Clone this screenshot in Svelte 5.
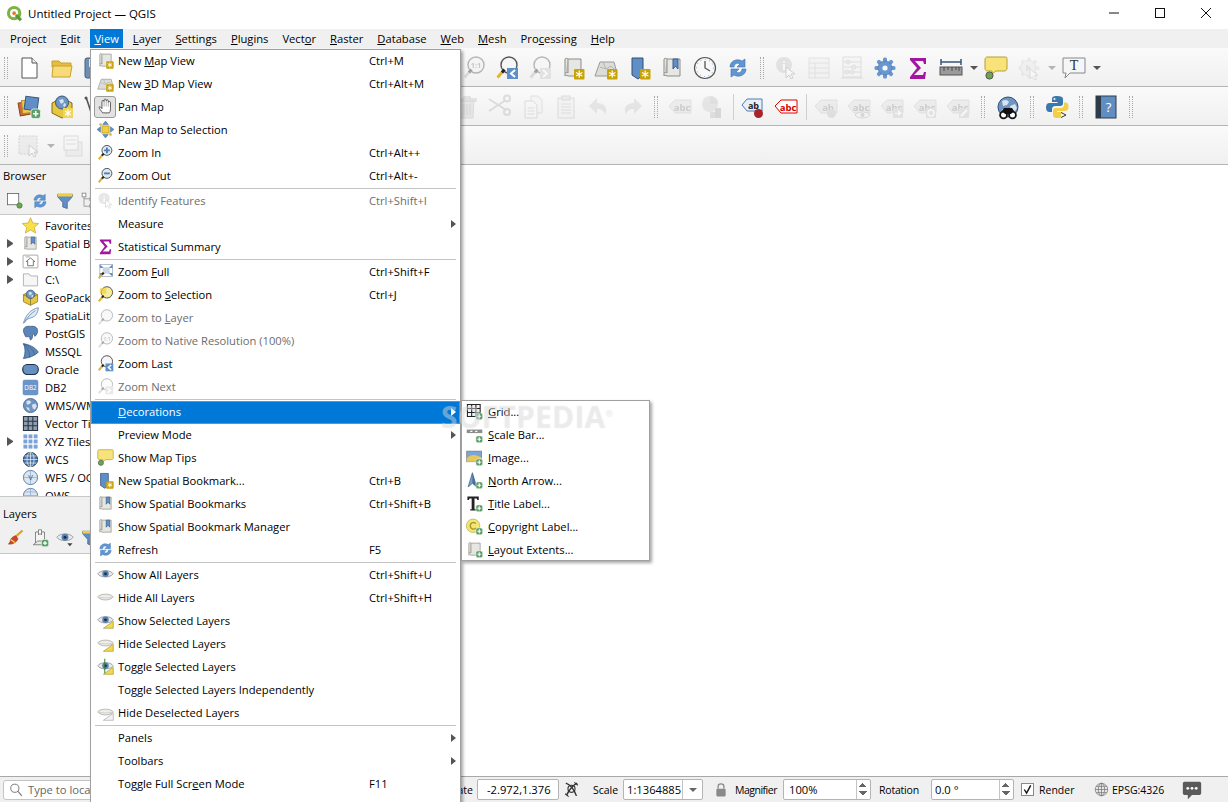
<script>
  // building blocks for the small icons, all in a 24x24 box
  const starBadge = '<rect x="13" y="13" width="10.5" height="10.5" rx="1" fill="#c9a208"/><path d="M18.2 14.6v7.2M15 16.4l6.4 3.6M21.4 16.4l-6.4 3.6" stroke="#fff" stroke-width="1.2"/>';
  const plusBadge = '<rect x="14" y="14" width="9.5" height="9.5" rx="2.5" fill="#5c9e68" stroke="#eef4ee" stroke-width=".8"/><path d="M18.7 16v5.4M16 18.7h5.4" stroke="#fff" stroke-width="1.6"/>';
  const scroll = '<path d="M4 3c1-1 2-1 3 0h13v17H7c-1.5-1-2.5-1-3 0z" fill="#e6e6e2" stroke="#8d8d88"/><path d="M7 3v14c-1-1-2-1-3 0" fill="#cfcfca" stroke="#8d8d88"/>';
  const map3dBase = '<path d="M6 6h14l3 11-5 1-4 2H1z" fill="#dcdcd8" stroke="#9a9a96"/><path d="M6 11l6 2 5-3 4 4M9 6l3 7" fill="none" stroke="#b5b5b0"/>';
  const bookmarkBlue = '<path d="M5 2h11v17l-5 4-6-4z" fill="#5f8fc6" stroke="#2f4f78"/>';
  const bookmarkGray = scroll + '<path d="M13 3h5v10l-2.5-3-2.5 3z" fill="#5f8fc6" stroke="#3c5f8c"/>';
  const glass = (fill = '#f4f6f8', r = 7) => `<circle cx="14" cy="9" r="${r}" fill="${fill}" stroke="#555" stroke-width="1.4"/>`;
  const handle = '<path d="M9 14 2.5 21.5" stroke="#e2b428" stroke-width="2.8"/><path d="M9.5 13.5 7 16.5" stroke="#222" stroke-width="2.8"/>';
  const eyeOpen = '<path d="M1 11c4-6 18-6 22 0-4 6-18 6-22 0z" fill="#e6e8ec" stroke="#8a8a8a"/><circle cx="12" cy="11" r="4.6" fill="#5582b4"/><circle cx="12" cy="11" r="2" fill="#1d2c3e"/>';
  const eyeShut = '<path d="M1 11c4-5 18-5 22 0-4 6-18 6-22 0z" fill="#ecebe6" stroke="#a3a39e"/><path d="M1 11c5 2 17 2 22 0" fill="#f8f8f4" stroke="#c4c4bf"/>';
  const corner = '<path d="M9 23 23 23V13z" fill="#f4d94a" stroke="#948634" stroke-width=".8"/>';
  const globeBase = '<circle cx="12" cy="12" r="10" fill="#6f95c2" stroke="#2f4f78"/>';
  const land = '<path d="M6 6c3-2 6-1 7 1l-2 3-4 1zM14 11l5-2 2 4-3 5-3-2zM6 14l4 1 1 5-3-2z" fill="#d7e3f0"/>';
  const lat = '<path d="M2 12h20M3.6 7h16.8M3.6 17h16.8M12 2v20" stroke="#e8eff7" stroke-width="1" fill="none"/><ellipse cx="12" cy="12" rx="5" ry="10" fill="none" stroke="#e8eff7"/>';
  const teeth = (color) => {
    let s = '';
    for (let a = 0; a < 360; a += 45) s += `<rect x="10" y="1.5" width="4" height="6" rx="1.5" fill="${color}" transform="rotate(${a} 12 12)"/>`;
    return s;
  };
  const tag = (txt, fill, line, ink) => `<path d="M1 11l6-6h16v13H7z" fill="${fill}" stroke="${line}"/><text x="14" y="15.5" font-size="9.5" font-weight="700" font-family="Open Sans" text-anchor="middle" fill="${ink}">${txt}</text>`;
  const grayTag = (txt) => tag(txt, '#dededa', '#c0c0bc', '#8e8e8a');
  const funnel = '<path d="M2 3h20v3l-7 8v8l-6-2v-6L2 6z" fill="#5f8fc6" stroke="#3c5f8c"/><rect x="2" y="2.5" width="20" height="3.5" fill="#f2cf3e"/>';
  const refresh = '<path d="M4 11C4 5 11 2 16 5l3-2v8h-8l3-3C11 6 8 8 8 11z" fill="#5f97d6" stroke="#3f6fa8" stroke-width=".6"/><path d="M20 13c0 6-7 9-12 6l-3 2v-8h8l-3 3c3 2 6 0 6-3z" fill="#5f97d6" stroke="#3f6fa8" stroke-width=".6"/>';

  const icons = {
    qgis: '<circle cx="11.5" cy="11.5" r="8" fill="none" stroke="#7cb342" stroke-width="4.4"/><path d="M14 14l7 7.5" stroke="#5a9a32" stroke-width="4.4"/><circle cx="11.5" cy="11.5" r="2.6" fill="#e8792b"/>',
    newfile: '<path d="M5 2h10l5 5v15H5z" fill="#fff" stroke="#555"/><path d="M15 2v5h5" fill="#f2f2f2" stroke="#555"/>',
    folder: '<path d="M2 5h7l2 2h10v4H2z" fill="#e7bc45" stroke="#c9a227"/><path d="M3 10h19l-2 11H2z" fill="#f8da78" stroke="#c9a227"/>',
    save: '<rect x="2" y="2" width="20" height="20" rx="2" fill="#6d8fb5" stroke="#44607f"/><rect x="6" y="3" width="12" height="8" fill="#e6eaef"/><rect x="7" y="14" width="10" height="8" fill="#f6f6f6"/>',
    layersAdd: '<rect x="2" y="7" width="13" height="13" fill="#d0683a" stroke="#8f4420" transform="rotate(-10 8 13)"/><rect x="5" y="5" width="13" height="13" fill="#f0c94a" stroke="#b08e24" transform="rotate(-6 11 11)"/><rect x="8" y="2" width="13" height="13" fill="#5f8fc6" stroke="#36587f" transform="rotate(8 14 8)"/>' + plusBadge,
    gpkg: '<path d="M2 8l10-5 10 5v10l-10 5-10-5z" fill="#e9c63f" stroke="#7a6a20"/><path d="M2 8l10 5 10-5M12 13v10" fill="none" stroke="#7a6a20"/><circle cx="12" cy="7.5" r="6" fill="#6f95c2" stroke="#35557e"/><path d="M9 5l4-1 1 3-3 2zM14 8l2 1-1 3-2-1z" fill="#d7e3f0"/>',
    gpkgNew: '<path d="M2 8l10-5 10 5v10l-10 5-10-5z" fill="#e9c63f" stroke="#7a6a20"/><circle cx="12" cy="7.5" r="6.5" fill="#6f95c2" stroke="#35557e"/><path d="M9 5l4-1 1 3-3 2zM14 8l2 1-1 3-2-1z" fill="#d7e3f0"/><rect x="13" y="13" width="10" height="10" fill="#f2d455"/><path d="M18 14.5v7M15 16l6 4M21 16l-6 4" stroke="#fff" stroke-width="1.2"/>',
    digit: '<path d="M3 2l6 18" stroke="#555" stroke-width="1.6" fill="none"/><circle cx="3" cy="3" r="1.5" fill="#555"/>',
    selectRect: '<rect x="2" y="2" width="18" height="18" fill="#dededa" stroke="#9a9a96" stroke-dasharray="2 1.4"/><path d="M12 11v11l3-3 2 4 2-1-2-4h4z" fill="#fff" stroke="#9a9a96"/>',
    deselect: '<rect x="4" y="8" width="16" height="14" fill="#e2e2de" stroke="#b8b8b4"/><rect x="2" y="2" width="14" height="14" fill="#f6f6f4" stroke="#b0b0ac"/><path d="M4 6h10M4 10h10" stroke="#b8b8b4"/>',
    mapview: scroll + starBadge,
    map3d: map3dBase + starBadge,
    hand: '<path d="M8 21c-2-3-5-6-5-8 0-1 2-1 3 1l1 1V5c0-2 3-2 3 0V3c0-2 3-2 3 0v1c0-2 3-2 3 0v2c0-2 3-1 3 0v9c0 3-1 6-2 6z" fill="#fff" stroke="#444" stroke-width="1.2"/><path d="M10 5v7M13 4v8M16 5v7" stroke="#777" stroke-width=".8"/>',
    panSel: '<rect x="7" y="7" width="10" height="10" fill="#f0d040" stroke="#a88f20"/><path d="M12 0l4 5H8zM12 24l-4-5h8zM0 12l5-4v8zM24 12l-5 4V8z" fill="#5f8fc6" stroke="#36587f" stroke-width=".6"/><circle cx="5" cy="5" r="2" fill="#e0c030"/><circle cx="19" cy="19" r="2" fill="#e0c030"/>',
    zoomIn: glass('#dfe9f4') + handle + '<path d="M14 5v8M10 9h8" stroke="#4f7cae" stroke-width="2.6"/>',
    zoomOut: glass('#dfe9f4') + handle + '<path d="M10 9h8" stroke="#4f7cae" stroke-width="2.6"/>',
    identify: '<circle cx="10" cy="9" r="8" fill="#c4c4c4"/><text x="10" y="13.5" font-size="12" font-weight="700" font-family="Liberation Serif" text-anchor="middle" fill="#fff">i</text><path d="M12 11v11l3-3 2 4 2-1-2-4h4z" fill="#fff" stroke="#999"/>',
    sigma: '<path d="M4 2h16v6h-2l-1-3H9l6 7-7 7h9l1-3h2l-1 7H4v-2l7-9-7-8z" fill="#a3169f"/>',
    zoomFull: '<rect x="4" y="2" width="18" height="17" fill="#fff" stroke="#9aa5b5"/><path d="M4 2l6 5H4zM22 2l-6 5h6zM22 19l-6-5h6zM4 19l6-5H4z" fill="#5f8fc6"/><rect x="8" y="6" width="10" height="9" fill="#c9d6e6"/>' + handle,
    zoomSel: glass('#f6ee9a', 8) + handle + '<rect x="4" y="3" width="9" height="8" fill="#f0d040" opacity=".7"/>',
    zoomLayer: glass('#f0f0f0', 8) + handle,
    zoomNative: glass('#f2f2f2', 8) + handle + '<text x="14" y="12" font-size="7.5" font-weight="700" font-family="Open Sans" text-anchor="middle" fill="#888">1:1</text>',
    zoomLast: glass('#f4f6f8', 8) + handle + '<rect x="12" y="12" width="11" height="11" fill="#5f8fc6"/><path d="M20 14l-4 3.5 4 3.5" fill="none" stroke="#fff" stroke-width="2"/>',
    zoomNext: glass('#f4f6f8', 8) + handle + '<rect x="12" y="12" width="11" height="11" fill="#c8c8c8"/><path d="M15 14l4 3.5-4 3.5" fill="none" stroke="#fff" stroke-width="2"/>',
    tips: '<path d="M3 1h18c2 0 2 1 2 3v8c0 2-1 3-3 3H12l-4 3v-3H4c-2 0-3-1-3-3V4c0-2 1-3 2-3z" fill="#f7e37a" stroke="#b8a030"/><circle cx="5.5" cy="19.5" r="3.6" fill="#6aa84f" stroke="#555"/>',
    bookmarkNew: bookmarkBlue + starBadge,
    bookmarks: bookmarkGray,
    refresh,
    eye: eyeOpen,
    eyeShut,
    eyeSel: eyeOpen + corner,
    hideSel: eyeShut + corner,
    toggleSel: eyeOpen + '<path d="M11 1v21" stroke="#2f7d2f" stroke-width="1.4"/>' + corner,
    hideDesel: eyeShut + '<path d="M9 23 23 23V13z" fill="#f2f2f0" stroke="#9a9a96" stroke-width=".8"/>',
    grid: '<path d="M2 2h18v17H2zM2 7.7h18M2 13.4h18M8 2v17M14 2v17" fill="#f3f3f3" stroke="#222" stroke-width="1.5"/>' + plusBadge,
    scalebar: '<path d="M1 5h22v5H1z" fill="#8d8d8d"/><path d="M6 7.5h3M13 7.5h3" stroke="#fff" stroke-width="1.6"/>' + plusBadge,
    image: '<rect x="1" y="3" width="21" height="15" fill="#7ba5d5" stroke="#777"/><path d="M1 13c6-6 12-6 21-1v6H1z" fill="#e7c75a"/>' + plusBadge,
    north: '<path d="M9 1 3 21l6-5 6 5z" fill="#7f9fcb" stroke="#3c5a85"/><path d="M9 1v15l6 5z" fill="#4a6f9f"/>' + plusBadge,
    title: '<path d="M2 2h16v5h-2l-1-2h-3v15h2v2H6v-2h2V5H5L4 7H2z" fill="#222"/>' + plusBadge,
    copyright: '<circle cx="10" cy="11" r="9.5" fill="#f2e774" stroke="#b9ad40"/><path d="M14 8c-2-3-8-2-8 3s6 6 8 3" fill="none" stroke="#a89a30" stroke-width="2"/>' + plusBadge,
    layout: scroll + plusBadge,
    trash: '<path d="M5 6h14l-1 17H6z" fill="#d6d0cc" stroke="#b8b2ae"/><path d="M3 4h18v2H3zM9 2h6v2H9zM9 9v11M12 9v11M15 9v11" fill="none" stroke="#b8b2ae" stroke-width="1.4"/>',
    cut: '<path d="M1 4l17 11M1 16 18 5" stroke="#b5b5b1" stroke-width="2"/><circle cx="19" cy="17" r="3" fill="none" stroke="#b5b5b1" stroke-width="2"/><circle cx="19" cy="3.5" r="3" fill="none" stroke="#b5b5b1" stroke-width="2"/>',
    copy: '<path d="M10 1h7l4 4v13H10z" fill="#f2f2f2" stroke="#bcbcbc"/><path d="M4 6h8l4 4v13H4z" fill="#f6f6f6" stroke="#b4b4b4"/><path d="M6.5 13h7M6.5 16h7M6.5 19h7" stroke="#bcbcbc"/>',
    paste: '<rect x="4" y="3" width="16" height="20" fill="#efefef" stroke="#b4b4b4"/><rect x="8" y="1" width="8" height="4" fill="#dcdcdc" stroke="#b4b4b4"/><path d="M7 9h10M7 12h10M7 15h10M7 18h10" stroke="#bcbcbc"/>',
    undo: '<path d="M10 3 2 11l8 8v-5c4 0 7 1 8 6 3-7 0-12-8-12z" fill="#cfcbc8"/>',
    redo: '<path d="M14 3l8 8-8 8v-5c-4 0-7 1-8 6-3-7 0-12 8-12z" fill="#cfcbc8"/>',
    abc: grayTag('abc'),
    diagram: '<circle cx="9" cy="9" r="8" fill="#c8cfc8"/><path d="M9 9V1a8 8 0 0 1 8 8z" fill="#d8b8b0"/><rect x="14" y="13" width="6" height="10" fill="#a8b0a8"/><rect x="9" y="17" width="5" height="6" fill="#c0c0bc"/>',
    abPin: '<path d="M1 10l5-6h15v12H6z" fill="#e8eff8" stroke="#4a7cc0"/><text x="12.5" y="14" font-size="9" font-weight="700" font-family="Open Sans" text-anchor="middle" fill="#222">ab</text><circle cx="17.5" cy="18.5" r="4.5" fill="#a82228"/>',
    abcRed: tag('abc', '#fff', '#e00000', '#d00000'),
    abGray: grayTag('ab') + '<circle cx="17.5" cy="18.5" r="4.5" fill="#c8bfbf"/>',
    abcEye: grayTag('abc') + '<path d="M8 20c3-4 12-4 15 0-3 4-12 4-15 0z" fill="#f2f2f2" stroke="#aaa"/><circle cx="15.5" cy="20" r="2" fill="#aaa"/>',
    abcMove: grayTag('abc') + '<rect x="13" y="13" width="10" height="10" fill="#c8c8c4"/><path d="M15 18h3v-3l4 3-4 3v-2h-3z" fill="#fff"/>',
    abcRot: grayTag('abc') + '<rect x="13" y="13" width="10" height="10" fill="#c8c8c4"/><circle cx="18" cy="18" r="3" fill="none" stroke="#fff" stroke-width="1.4"/>',
    abcEdit: grayTag('abc') + '<rect x="13" y="13" width="10" height="10" fill="#c8c8c4"/><path d="M15 21l6-6" stroke="#fff" stroke-width="2"/>',
    globeFind: globeBase + land + '<circle cx="7.5" cy="20" r="3.4" fill="#fff" stroke="#111" stroke-width="1.8"/><circle cx="16.5" cy="20" r="3.4" fill="#fff" stroke="#111" stroke-width="1.8"/><path d="M6 16l2-3h8l2 3-3 3H9z" fill="#111"/>',
    python: '<path d="M12 1C8 1 7 2 7 4v3h5.5v1H4.5C2 8 1 10 1 12.5S2 17 4.5 17H7v-3c0-2 1.5-3 3.5-3h5c1.5 0 2.5-1 2.5-2.5V4c0-2-2-3-6-3z" fill="#3d78ad"/><circle cx="9.5" cy="4" r="1" fill="#fff"/><path d="M12.5 23c4 0 5-1 5-3v-3H12v-1h8c2.5 0 3.5-2 3.5-4.5S22.5 7.5 20 7.5h-1V10c0 2-1.5 3-3.500 3h-5C9 13 8 14 8 15.5V20c0 2 1 3 4.5 3z" fill="#f2cf4a"/><path d="M16 17.5l5 2.5-5 2.5" fill="#fff" stroke="#333"/>',
    help: '<rect x="2" y="1" width="20" height="22" fill="#618ec2" stroke="#2c3a4a"/><rect x="2" y="1" width="5" height="22" fill="#2c3a4a"/><text x="14.5" y="16.5" font-size="13" font-family="Open Sans" text-anchor="middle" fill="#fff">?</text>',
    clock: '<circle cx="12" cy="12" r="10.5" fill="#f8f8f8" stroke="#555" stroke-width="1.2"/><circle cx="12" cy="12" r="8.5" fill="none" stroke="#7fa3cc" stroke-dasharray="1 3.4"/><path d="M12 5v7l5 3" fill="none" stroke="#555" stroke-width="1.3"/>',
    attrTable: '<rect x="2" y="2" width="20" height="20" fill="#efefec" stroke="#c4c4c0"/><path d="M2 7h20M2 12h20M2 17h20M8 7v15" stroke="#c4c4c0"/>',
    abacus: '<rect x="3" y="1" width="18" height="20" fill="#f4f4f2" stroke="#bcbcb8"/><path d="M1 22h22M3 6h18M3 11h18M3 16h18" stroke="#bcbcb8"/><g fill="none" stroke="#bcbcb8"><circle cx="8" cy="6" r="2"/><circle cx="14" cy="11" r="2"/><circle cx="7" cy="16" r="2"/><circle cx="12" cy="16" r="2"/></g>',
    gear: teeth('#6a97cf') + '<circle cx="12" cy="12" r="7" fill="#6a97cf" stroke="#4a76ad" stroke-width=".6"/><circle cx="12" cy="12" r="2.6" fill="#f4f7fb"/>',
    ruler: '<path d="M2 6h20M2 3v6M22 3v6" stroke="#35557e" stroke-width="1.5"/><rect x="1" y="11" width="22" height="8" fill="#9b9b9b" stroke="#555"/><path d="M5 11v4M9 11v3M13 11v4M17 11v3M20 11v4" stroke="#333" stroke-width=".8"/>',
    runGear: teeth('#d8d8d6') + '<circle cx="11" cy="12" r="7.5" fill="#e8e8e6" stroke="#cfcfcc"/><path d="M9 8.5v7l5-3.5z" fill="#c4c4c4"/><path d="M13 13v10l2.5-2.5 2 3.5 2-1-2-3.5H21z" fill="#fff" stroke="#bbb"/>',
    textBox: '<path d="M1 2h22v15H8l-5 5 1-5H1z" fill="#f4f6f8" stroke="#888"/><text x="12" y="14" font-size="14" font-family="Liberation Serif" text-anchor="middle" fill="#333">T</text>',
    addBox: '<rect x="2" y="2" width="15" height="15" fill="#fff" stroke="#555"/><circle cx="18" cy="18" r="3.5" fill="#6aa84f" stroke="#3f7a2f"/>',
    funnel,
    collapse: '<path d="M4 3v16h8M4 9h8" fill="none" stroke="#888"/><rect x="1.5" y="1.5" width="5" height="5" fill="#fff" stroke="#777"/><rect x="11" y="7" width="5" height="5" fill="#e99a30"/><rect x="11" y="16" width="5" height="5" fill="#e99a30"/>',
    brush: '<path d="M22 2 12 11" stroke="#e0a020" stroke-width="3"/><path d="M13 9l3 4c-2 5-7 8-13 7 3-2 2-3 3-6 2-3 5-5 7-5z" fill="#d0452a" stroke="#7f2a18" stroke-width=".6"/><path d="M6 14l6 4" stroke="#f2d455" stroke-width="2"/>',
    addGroup: '<path d="M6 4h12v15H6z" fill="#f4f4f0" stroke="#666"/><path d="M10 1h4v7l-2-2-2 2z" fill="#fff" stroke="#666"/><path d="M3 21 9 16h6l6 5z" fill="#e8e8e4" stroke="#666"/>' + plusBadge,
    eyeMenu: eyeOpen + '<path d="M15 19h7l-3.5 4z" fill="#444"/>',
    star: '<path d="M12 1l3.3 7.5 8.2.7-6.2 5.4 1.9 8L12 18.300 4.8 22.600l1.9-8L.5 9.200l8.2-.7z" fill="#f8e04a" stroke="#c9a227"/>',
    home: '<rect x="1.5" y="3" width="21" height="18" rx="1" fill="#fff" stroke="#8a8a8a"/><path d="M5 5.5h6" stroke="#8a8a8a"/><path d="M12 7l6 5h-2v6H8v-6H6z" fill="#fff" stroke="#444"/>',
    folderLine: '<path d="M2 4h8l2 3h10v14H2z" fill="#f6f6f6" stroke="#9a9a9a"/>',
    feather: '<path d="M2 23C5 12 12 3 23 1c0 8-5 14-13 15-2 1-5 3-8 7z" fill="#dfe9f4" stroke="#4f7cae"/><path d="M3 22C8 14 13 9 19 5" stroke="#4f7cae" fill="none"/>',
    postgis: '<path d="M2 8c0-5 5-7 10-6 5-1 10 1 10 6 0 4-2 7-4 8l-1-4-2 2c0 3-1 7-3 7-1 0-1-3-1-5-1 1-3 1-4 0-1 2-2 1-3-2-1-2-2-4-2-6z" fill="#5d86b8" stroke="#2f4f78"/>',
    mssql: '<path d="M2 1c8 1 17 5 21 12-5 5-13 8-21 9 3-7 3-14 0-21z" fill="#5d86b8" stroke="#2f4f78"/><path d="M2 1c3 3 9 8 9 20M2 1c7 3 14 7 16 16" fill="none" stroke="#2f4f78" stroke-width=".7"/>',
    oracle: '<rect x="1" y="5" width="22" height="14" rx="6.5" fill="#6690c2" stroke="#1f2f45" stroke-width="1.6"/>',
    db2: '<rect x="1" y="1" width="22" height="22" rx="3" fill="#6b95c8"/><text x="12" y="15.5" font-size="9" font-family="Open Sans" text-anchor="middle" fill="#fff">DB2</text>',
    wms: globeBase + land,
    vtiles: '<path d="M2 2h20v20H2zM2 8.7h20M2 15.3h20M8.7 2v20M15.3 2v20" fill="#8f9db0" stroke="#2a3442" stroke-width="1.5"/>',
    xyz: '<rect x="2" y="2" width="5.5" height="5.5" fill="#7ba3d8"/><rect x="9.2" y="2" width="5.5" height="5.5" fill="#7ba3d8"/><rect x="16.5" y="2" width="5.5" height="5.5" fill="#7ba3d8"/><rect x="2" y="9.2" width="5.5" height="5.5" fill="#7ba3d8"/><rect x="9.2" y="9.2" width="5.5" height="5.5" fill="#7ba3d8"/><rect x="16.5" y="9.2" width="5.5" height="5.5" fill="#7ba3d8"/><rect x="2" y="16.5" width="5.5" height="5.5" fill="#7ba3d8"/><rect x="9.2" y="16.5" width="5.5" height="5.5" fill="#7ba3d8"/><rect x="16.5" y="16.5" width="5.5" height="5.5" fill="#7ba3d8"/>',
    wcs: '<circle cx="12" cy="12" r="10" fill="#5078a8" stroke="#1f2f45" stroke-width="1.3"/>' + lat,
    wfs: '<circle cx="12" cy="12" r="10" fill="#dbe6f2" stroke="#5078a8" stroke-width="1.3"/><path d="M2 12h20M12 2v20" stroke="#8aa8cc"/><text x="12" y="16" font-size="11" font-family="Open Sans" text-anchor="middle" fill="#37587f">V</text>',
    ows: '<circle cx="12" cy="12" r="10" fill="#dbe6f2" stroke="#5078a8" stroke-width="1.3"/><path d="M2 12h20M3.6 7h16.8M12 2v20" stroke="#8aa8cc"/>',
    search: '<circle cx="10" cy="9" r="7" fill="none" stroke="#7a7a7a" stroke-width="1.7"/><path d="M15 14l7 8" stroke="#7a7a7a" stroke-width="2"/>',
    lock: '<rect x="4" y="10" width="16" height="13" rx="2" fill="#8a8a8a"/><path d="M7 10V6c0-6 10-6 10 0v4" fill="none" stroke="#8a8a8a" stroke-width="2.2"/>',
    coords: '<path d="M4 3c6 2 12 10 15 18M20 3C14 6 8 14 5 20" stroke="#333" stroke-width="2" fill="none"/><circle cx="12" cy="11" r="5" fill="none" stroke="#333" stroke-width="1.6"/><path d="M3 18l5 4M16 2l5 4" stroke="#333" stroke-width="1.5"/>',
    epsg: '<circle cx="12" cy="12" r="10" fill="#e6e6e6" stroke="#666"/><path d="M2 12h20M3.6 7h16.8M3.6 17h16.8M12 2v20" stroke="#666" fill="none"/><ellipse cx="12" cy="12" rx="5" ry="10" fill="none" stroke="#666"/>',
    message: '<path d="M3 2h18c1 0 2 1 2 2v12c0 1-1 2-2 2H12l-5 5v-5H3c-1 0-2-1-2-2V4c0-1 1-2 2-2z" fill="#5a5a5a"/><circle cx="7" cy="10" r="1.7" fill="#fff"/><circle cx="12" cy="10" r="1.7" fill="#fff"/><circle cx="17" cy="10" r="1.7" fill="#fff"/>'
  };

  // labels use Qt's & notation for the underlined mnemonic
  function mnemonic(text) {
    const i = text.indexOf('&');
    if (i < 0) return [text, '', ''];
    return [text.slice(0, i), text[i + 1], text.slice(i + 2)];
  }

  const menubar = ['Pro&ject', '&Edit', '&View', '&Layer', '&Settings', '&Plugins', 'Vect&or', '&Raster', '&Database', '&Web', '&Mesh', 'Pro&cessing', '&Help'];

  const viewMenu = [
    { icon: 'mapview', label: 'New &Map View', keys: 'Ctrl+M' },
    { icon: 'map3d', label: 'New &3D Map View', keys: 'Ctrl+Alt+M' },
    { icon: 'hand', label: 'Pan Map', checked: true },
    { icon: 'panSel', label: 'Pan Map to Selection' },
    { icon: 'zoomIn', label: 'Zoom In', keys: 'Ctrl+Alt++' },
    { icon: 'zoomOut', label: 'Zoom Out', keys: 'Ctrl+Alt+-' },
    { sep: true },
    { icon: 'identify', label: 'Identify Features', keys: 'Ctrl+Shift+I', off: true },
    { label: 'Measure', sub: true },
    { icon: 'sigma', label: 'Statistical Summary' },
    { sep: true },
    { icon: 'zoomFull', label: 'Zoom &Full', keys: 'Ctrl+Shift+F' },
    { icon: 'zoomSel', label: 'Zoom to &Selection', keys: 'Ctrl+J' },
    { icon: 'zoomLayer', label: 'Zoom to &Layer', off: true },
    { icon: 'zoomNative', label: 'Zoom to Native Resolution (100%)', off: true },
    { icon: 'zoomLast', label: 'Zoom Last' },
    { icon: 'zoomNext', label: 'Zoom Next', off: true },
    { sep: true },
    { label: '&Decorations', sub: true, active: true },
    { label: 'Preview Mode', sub: true },
    { icon: 'tips', label: 'Show Map Tips' },
    { icon: 'bookmarkNew', label: 'New Spatial Bookmark...', keys: 'Ctrl+B' },
    { icon: 'bookmarks', label: 'Show Spatial Bookmarks', keys: 'Ctrl+Shift+B' },
    { icon: 'bookmarks', label: 'Show Spatial Bookmark Manager' },
    { icon: 'refresh', label: 'Refresh', keys: 'F5' },
    { sep: true },
    { icon: 'eye', label: 'Show All Layers', keys: 'Ctrl+Shift+U' },
    { icon: 'eyeShut', label: 'Hide All Layers', keys: 'Ctrl+Shift+H' },
    { icon: 'eyeSel', label: 'Show Selected Layers' },
    { icon: 'hideSel', label: 'Hide Selected Layers' },
    { icon: 'toggleSel', label: 'Toggle Selected Layers' },
    { label: 'Toggle Selected Layers Independently' },
    { icon: 'hideDesel', label: 'Hide Deselected Layers' },
    { sep: true },
    { label: 'Panels', sub: true },
    { label: 'Toolbars', sub: true },
    { label: 'Toggle Full Scr&een Mode', keys: 'F11' }
  ];

  const decorations = [
    { icon: 'grid', label: '&Grid...' },
    { icon: 'scalebar', label: '&Scale Bar...' },
    { icon: 'image', label: '&Image...' },
    { icon: 'north', label: '&North Arrow...' },
    { icon: 'title', label: '&Title Label...' },
    { icon: 'copyright', label: '&Copyright Label...' },
    { icon: 'layout', label: '&Layout Extents...' }
  ];

  const toolbars = [
    [
      { grip: 12 }, { i: 'newfile' }, { i: 'folder' }, { i: 'save' }, { gap: 346.5 },
      { i: 'zoomNative', off: true }, { i: 'zoomLast' }, { i: 'zoomNext', off: true }, { i: 'mapview' }, { i: 'map3d' },
      { i: 'bookmarkNew' }, { i: 'bookmarks' }, { i: 'clock' }, { i: 'refresh' }, { grip: 15 },
      { i: 'identify', off: true }, { i: 'attrTable', off: true }, { i: 'abacus', off: true }, { i: 'gear' }, { i: 'sigma' },
      { i: 'ruler' }, { arrow: true }, { i: 'tips' }, { i: 'runGear', off: true }, { arrow: true, off: true }, { i: 'textBox' }, { arrow: true }
    ],
    [
      { grip: 12 }, { i: 'layersAdd' }, { i: 'gpkgNew' }, { i: 'digit' }, { gap: 339 },
      { i: 'trash', off: true }, { i: 'cut', off: true }, { i: 'copy', off: true }, { i: 'paste', off: true }, { i: 'undo', off: true }, { i: 'redo', off: true },
      { grip: 15 }, { i: 'abc', off: true }, { i: 'diagram', off: true }, { line: 7 }, { i: 'abPin' }, { i: 'abcRed' }, { line: 7 },
      { i: 'abGray', off: true }, { i: 'abcEye', off: true }, { i: 'abcMove', off: true }, { i: 'abcRot', off: true }, { i: 'abcEdit', off: true },
      { grip: 17 }, { i: 'globeFind' }, { grip: 16 }, { i: 'python' }, { grip: 16 }, { i: 'help' }, { grip: 18 }
    ],
    [{ grip: 12 }, { i: 'selectRect', off: true }, { arrow: true, off: true }, { i: 'deselect', off: true }]
  ];

  const browserTree = [
    { icon: 'star', label: 'Favorites' },
    { icon: 'bookmarks', label: 'Spatial Bookmarks', open: true },
    { icon: 'home', label: 'Home', open: true },
    { icon: 'folderLine', label: 'C:\\', open: true },
    { icon: 'gpkg', label: 'GeoPackage' },
    { icon: 'feather', label: 'SpatiaLite' },
    { icon: 'postgis', label: 'PostGIS' },
    { icon: 'mssql', label: 'MSSQL' },
    { icon: 'oracle', label: 'Oracle' },
    { icon: 'db2', label: 'DB2' },
    { icon: 'wms', label: 'WMS/WMTS' },
    { icon: 'vtiles', label: 'Vector Tiles' },
    { icon: 'xyz', label: 'XYZ Tiles', open: true },
    { icon: 'wcs', label: 'WCS' },
    { icon: 'wfs', label: 'WFS / OGC API - Features' },
    { icon: 'ows', label: 'OWS' }
  ];
</script>

{#snippet ic(name, cls = '')}
  <svg class="ic {cls}" viewBox="0 0 24 24" aria-hidden="true">{@html icons[name]}</svg>
{/snippet}

{#snippet label(text)}
  {@const parts = mnemonic(text)}
  {parts[0]}<u>{parts[1]}</u>{parts[2]}
{/snippet}

<div class="window">
  <header class="titlebar">
    {@render ic('qgis', 'logo')}
    <span class="title">Untitled Project — QGIS</span>
    <div class="winctl">
      <svg viewBox="0 0 12 12"><path d="M1 6h10" stroke="#111" fill="none" /></svg>
      <svg viewBox="0 0 12 12"><rect x="1.5" y="1.5" width="9" height="9" stroke="#111" fill="none" /></svg>
      <svg viewBox="0 0 12 12"><path d="M1 1l10 10M11 1 1 11" stroke="#111" fill="none" /></svg>
    </div>
  </header>

  <nav class="menubar">
    {#each menubar as item}
      <span class="top-item" class:open={item === '&View'}>{@render label(item)}</span>
    {/each}
  </nav>

  {#each toolbars as bar}
    <div class="toolbar">
      {#each bar as t}
        {#if t.grip}
          <span class="grip-slot" style="width:{t.grip}px"><i class="grip"></i></span>
        {:else if t.line}
          <span class="line-slot" style="width:{t.line}px"><i class="vline"></i></span>
        {:else if t.gap}
          <span style="width:{t.gap}px"></span>
        {:else if t.arrow}
          <span class="drop" class:off={t.off}></span>
        {:else}
          <span class="tool">{@render ic(t.i, t.off ? 'dim tool-ic' : 'tool-ic')}</span>
        {/if}
      {/each}
    </div>
  {/each}

  <div class="middle">
    <aside class="dock">
      <div class="dock-title">Browser</div>
      <div class="dock-tools">
        {@render ic('addBox', 'small')}
        {@render ic('refresh', 'small')}
        {@render ic('funnel', 'small')}
        {@render ic('collapse', 'small')}
      </div>
      <ul class="tree">
        {#each browserTree as row}
          <li>
            <span class="twist" class:has={row.open}></span>
            {@render ic(row.icon, 'tree-ic')}
            <span>{row.label}</span>
          </li>
        {/each}
      </ul>
      <div class="dock-title layers">Layers</div>
      <div class="dock-tools layer-tools">
        {@render ic('brush', 'small')}
        {@render ic('addGroup', 'small')}
        {@render ic('eyeMenu', 'small')}
        {@render ic('funnel', 'small')}
      </div>
      <div class="layer-list"></div>
    </aside>
    <main class="canvas"></main>
  </div>

  <footer class="status">
    <div class="locator">
      {@render ic('search', 'loc-ic')}
      <span>Type to locate (Ctrl+K)</span>
    </div>
    <span class="spacer"></span>
    <span class="st-label">Coordinate</span>
    <span class="field coord">-2.972,1.376</span>
    {@render ic('coords', 'st-ic coord-ic')}
    <span class="st-label scale">Scale</span>
    <span class="field combo">1:1364885<b class="combo-btn"><i class="drop"></i></b></span>
    {@render ic('lock', 'st-ic lock-ic')}
    <span class="st-label magn">Magnifier</span>
    <span class="field spin magn-box">100%<b class="spin-btn"></b></span>
    <span class="st-label rot">Rotation</span>
    <span class="field spin rot-box">0.0 °<b class="spin-btn"></b></span>
    <span class="check"><svg viewBox="0 0 12 12"><path d="M2.5 6l2.5 4L9.5 1.5" fill="none" stroke="#111" stroke-width="1.5" /></svg></span>
    <span class="st-label render">Render</span>
    {@render ic('epsg', 'st-ic epsg-ic')}
    <span class="st-label epsg">EPSG:4326</span>
    {@render ic('message', 'msg-ic')}
  </footer>

  <div class="menu view-menu">
    {#each viewMenu as m}
      {#if m.sep}
        <div class="sep"></div>
      {:else}
        <div class="row" class:off={m.off} class:active={m.active}>
          <span class="slot" class:checked={m.checked}>{#if m.icon}{@render ic(m.icon, m.off ? 'menu-ic dim' : 'menu-ic')}{/if}</span>
          <span>{@render label(m.label)}</span>
          <span>{m.keys ?? ''}</span>
          {#if m.sub}<i class="caret"></i>{/if}
        </div>
      {/if}
    {/each}
  </div>

  <div class="menu deco-menu">
    {#each decorations as m}
      <div class="deco-row">
        <span class="slot">{@render ic(m.icon, 'menu-ic')}</span>
        <span>{@render label(m.label)}</span>
      </div>
    {/each}
  </div>

  <div class="watermark">SOFTPEDIA<sup>®</sup></div>
</div>

<style>
  :global(body) {
    margin: 0;
    background: #fff;
    overflow: hidden;
  }

  .window {
    position: relative;
    width: 1228px;
    height: 802px;
    overflow: hidden;
    display: flex;
    flex-direction: column;
    font-family: "Open Sans", "Noto Sans", sans-serif;
    font-size: 11.2px;
    color: #000;
    background: #fff;
  }

  .ic {
    display: block;
    flex: none;
    overflow: visible;
  }

  :global(.dim) {
    filter: grayscale(1);
    opacity: 0.4;
  }

  .titlebar {
    height: 29px;
    flex: none;
    box-sizing: border-box;
    padding-bottom: 3px;
    display: flex;
    align-items: center;
    background: #fff;
  }

  .titlebar :global(.logo) {
    width: 17px;
    height: 17px;
    margin-left: 6px;
  }

  .title {
    margin-left: 5px;
    font-size: 11.5px;
  }

  .winctl {
    margin-left: auto;
    display: flex;
    gap: 34px;
    margin-right: 16px;
  }

  .winctl svg {
    width: 12px;
    height: 12px;
  }

  .menubar {
    height: 19px;
    flex: none;
    display: flex;
    align-items: center;
    gap: 6px;
    padding-left: 6px;
    background: #f0f0f0;
  }

  .top-item {
    padding: 0 4px;
    height: 19px;
    line-height: 19px;
    white-space: nowrap;
  }

  .top-item.open {
    background: #0078d7;
    color: #fff;
  }

  .toolbar {
    height: 36px;
    padding-top: 2px;
    flex: none;
    display: flex;
    align-items: center;
    background: linear-gradient(#fafafa, #f0f0f0);
    border-bottom: 1px solid #b4b4b4;
  }

  .tool {
    width: 33px;
    flex: none;
    display: flex;
    justify-content: center;
  }

  .tool :global(.tool-ic) {
    width: 24px;
    height: 24px;
  }

  .grip-slot,
  .line-slot {
    flex: none;
    display: flex;
    justify-content: center;
  }

  .grip {
    display: block;
    width: 2px;
    height: 22px;
    border-left: 1px dotted #a8a8a8;
    border-right: 1px dotted #a8a8a8;
  }

  .line-slot {
    justify-content: flex-end;
    padding-right: 2px;
    box-sizing: border-box;
  }

  .vline {
    display: block;
    width: 1px;
    height: 26px;
    background: #cfcfcf;
  }

  .drop {
    display: block;
    width: 0;
    height: 0;
    flex: none;
    margin: 0 2px;
    border-top: 4px solid #555;
    border-left: 4px solid transparent;
    border-right: 4px solid transparent;
  }

  .drop.off {
    border-top-color: #b4b4b4;
  }

  .middle {
    flex: 1;
    min-height: 0;
    display: flex;
  }

  .dock {
    width: 240px;
    flex: none;
    display: flex;
    flex-direction: column;
    background: #f0f0f0;
  }

  .dock-title {
    height: 21px;
    line-height: 21px;
    padding-left: 3px;
    flex: none;
  }

  .dock-tools {
    height: 28px;
    box-sizing: border-box;
    padding-top: 1px;
    flex: none;
    display: flex;
    align-items: center;
    gap: 7px;
    padding-left: 6px;
  }

  .dock-tools :global(.small) {
    width: 18px;
    height: 18px;
  }

  .tree {
    list-style: none;
    margin: 0;
    padding: 1px 0 0;
    height: 280px;
    overflow: hidden;
    flex: none;
    background: #fff;
    border-top: 1px solid #c8c8c8;
    border-bottom: 1px solid #c8c8c8;
  }

  .tree li {
    height: 18px;
    display: flex;
    align-items: center;
    padding-left: 7px;
    white-space: nowrap;
  }

  .twist {
    width: 6px;
    flex: none;
    height: 9px;
  }

  .twist.has {
    box-sizing: border-box;
    border-left: 6px solid #555;
    border-top: 4.5px solid transparent;
    border-bottom: 4.5px solid transparent;
  }

  .tree li :global(.tree-ic) {
    width: 17px;
    height: 17px;
    margin: 0 6px 0 9px;
  }

  .dock-title.layers {
    height: 29px;
    line-height: 34px;
  }

  .layer-tools {
    height: 27px;
    padding-top: 0;
    padding-bottom: 3px;
  }

  .layer-list {
    flex: 1;
    background: #fff;
    border-top: 1px solid #c8c8c8;
  }

  .canvas {
    flex: 1;
    background: #fff;
  }

  .status {
    height: 26px;
    flex: none;
    box-sizing: border-box;
    display: flex;
    align-items: center;
    padding: 0 26px 0 3px;
    background: #f0f0f0;
    border-top: 1px solid #a8a8a8;
    white-space: nowrap;
  }

  .locator {
    width: 300px;
    height: 20px;
    box-sizing: border-box;
    display: flex;
    align-items: center;
    gap: 5px;
    padding-left: 5px;
    background: #fff;
    border: 1px solid #c4c4c4;
    border-radius: 3px;
    color: #666;
  }

  .locator :global(.loc-ic) {
    width: 14px;
    height: 14px;
  }

  .spacer {
    flex: 1;
  }

  .field {
    height: 21px;
    line-height: 19px;
    box-sizing: border-box;
    background: #fff;
    border: 1px solid #b4b4b4;
    border-radius: 2px;
    padding-left: 3px;
    position: relative;
    flex: none;
  }

  .st-label {
    flex: none;
    font-size: 10.5px;
  }

  .coord {
    width: 82px;
    margin-left: 4px;
    padding-left: 9px;
  }

  .status :global(.st-ic) {
    width: 15px;
    height: 15px;
  }

  .status :global(.coord-ic) {
    width: 17px;
    height: 17px;
    margin-left: 4px;
  }

  .scale {
    width: 26px;
    margin-left: 13px;
  }

  .combo {
    width: 80px;
    margin-left: 4px;
  }

  .combo-btn,
  .spin-btn {
    position: absolute;
    top: 0;
    right: 0;
    bottom: 0;
    border-left: 1px solid #c4c4c4;
  }

  .combo-btn {
    width: 19px;
    display: flex;
    align-items: center;
    justify-content: center;
  }

  .combo-btn .drop {
    border-top-color: #666;
    margin: 0;
  }

  .spin-btn {
    width: 13px;
    background:
      linear-gradient(135deg, transparent 50%, #666 50%) 2px 3px / 4px 4px no-repeat,
      linear-gradient(225deg, transparent 50%, #666 50%) 6px 3px / 4px 4px no-repeat,
      linear-gradient(45deg, transparent 50%, #666 50%) 2px 11px / 4px 4px no-repeat,
      linear-gradient(315deg, transparent 50%, #666 50%) 6px 11px / 4px 4px no-repeat;
  }

  .status :global(.lock-ic) {
    margin-left: 11px;
    width: 14px;
    height: 16px;
  }

  .magn {
    width: 43px;
    margin-left: 7px;
    letter-spacing: -0.5px;
  }

  .magn-box {
    width: 88px;
    margin-left: 5px;
    padding-left: 5px;
  }

  .rot {
    width: 42px;
    margin-left: 8px;
    letter-spacing: -0.2px;
  }

  .rot-box {
    width: 83px;
    margin-left: 10px;
    padding-left: 3px;
  }

  .check {
    width: 13px;
    height: 13px;
    box-sizing: border-box;
    margin-left: 7px;
    background: #fff;
    border: 1px solid #8a8a8a;
    flex: none;
  }

  .check svg {
    display: block;
    width: 11px;
    height: 11px;
  }

  .render {
    width: 36px;
    margin-left: 5px;
  }

  .status :global(.epsg-ic) {
    margin-left: 19px;
  }

  .epsg {
    width: 53px;
    margin-left: 3px;
  }

  .status :global(.msg-ic) {
    width: 20px;
    height: 20px;
    margin-left: 17px;
  }

  .menu {
    position: absolute;
    box-sizing: border-box;
    background: #fff;
    border: 1px solid #a0a0a0;
    box-shadow: 2px 2px 3px rgba(0, 0, 0, 0.35);
    white-space: nowrap;
  }

  .view-menu {
    left: 90px;
    top: 49px;
    width: 371px;
    height: 760px;
  }

  .deco-menu {
    left: 461px;
    top: 400px;
    width: 189px;
    height: 161px;
  }

  .row {
    height: 23px;
    box-sizing: border-box;
    padding-bottom: 2px;
    display: grid;
    grid-template-columns: 27px 251px 1fr;
    grid-template-rows: 21px;
    align-items: center;
    position: relative;
  }

  .row.off {
    color: #6d6d6d;
  }

  .row.active {
    background: #0078d7;
    color: #fff;
    box-shadow: inset 0 0 0 1px #37a0ee;
  }

  .slot {
    display: flex;
    align-items: center;
    justify-content: center;
    width: 22px;
    height: 22px;
    margin-left: 3px;
    box-sizing: border-box;
  }

  .slot.checked {
    background: #e2e2e2;
    border: 1px solid #9a9a9a;
    border-radius: 3px;
  }

  .slot :global(.menu-ic) {
    width: 17px;
    height: 17px;
  }

  .sep {
    height: 1px;
    margin: 0 4px 1px;
    background: #c4c4c4;
  }

  .caret {
    position: absolute;
    right: 4px;
    top: 7px;
    box-sizing: border-box;
    border-left: 5px solid #555;
    border-top: 4px solid transparent;
    border-bottom: 4px solid transparent;
  }

  .active .caret {
    border-left-color: #fff;
  }

  .deco-row {
    height: 23px;
    box-sizing: border-box;
    padding-bottom: 2px;
    display: flex;
    align-items: center;
    gap: 3px;
  }

  .deco-row .slot {
    margin-left: 1px;
  }

  .watermark {
    position: absolute;
    left: 441px;
    top: 396px;
    font-size: 30px;
    font-weight: 700;
    letter-spacing: 0.2px;
    color: rgba(255, 255, 255, 0.35);
    text-shadow: 0 0 1px rgba(120, 120, 120, 0.22);
    pointer-events: none;
  }

  .watermark sup {
    font-size: 9px;
  }
</style>
